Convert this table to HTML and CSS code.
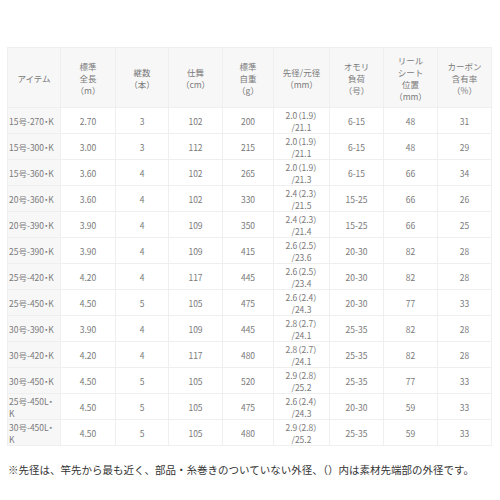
FILE: index.html
```html
<!DOCTYPE html>
<html lang="ja">
<head>
<meta charset="utf-8">
<link rel="stylesheet" href="styles.css">
</head>
<body>
<div class="page">
<table class="spec">
<colgroup>
<col class="c1"><col class="c2"><col class="c3"><col class="c4"><col class="c5"><col class="c6"><col class="c7"><col class="c8"><col class="c9">
</colgroup>
<thead>
<tr>
<th>アイテム</th>
<th>標準<br>全長<br>（m）</th>
<th>継数<br>（本）</th>
<th>仕舞<br>（cm）</th>
<th>標準<br>自重<br>（g）</th>
<th>先径/元径<br>（mm）</th>
<th>オモリ<br>負荷<br>（号）</th>
<th>リール<br>シート<br>位置<br>（mm）</th>
<th>カーボン<br>含有率<br>（%）</th>
</tr>
</thead>
<tbody>
<tr><td class="item">15号-270・K</td><td>2.70</td><td>3</td><td>102</td><td>200</td><td>2.0（1.9）<br>/21.1</td><td>6-15</td><td>48</td><td>31</td></tr>
<tr><td class="item">15号-300・K</td><td>3.00</td><td>3</td><td>112</td><td>215</td><td>2.0（1.9）<br>/21.1</td><td>6-15</td><td>48</td><td>29</td></tr>
<tr><td class="item">15号-360・K</td><td>3.60</td><td>4</td><td>102</td><td>265</td><td>2.0（1.9）<br>/21.3</td><td>6-15</td><td>66</td><td>34</td></tr>
<tr><td class="item">20号-360・K</td><td>3.60</td><td>4</td><td>102</td><td>330</td><td>2.4（2.3）<br>/21.5</td><td>15-25</td><td>66</td><td>26</td></tr>
<tr><td class="item">20号-390・K</td><td>3.90</td><td>4</td><td>109</td><td>350</td><td>2.4（2.3）<br>/21.4</td><td>15-25</td><td>66</td><td>25</td></tr>
<tr><td class="item">25号-390・K</td><td>3.90</td><td>4</td><td>109</td><td>415</td><td>2.6（2.5）<br>/23.6</td><td>20-30</td><td>82</td><td>28</td></tr>
<tr><td class="item">25号-420・K</td><td>4.20</td><td>4</td><td>117</td><td>445</td><td>2.6（2.5）<br>/23.4</td><td>20-30</td><td>82</td><td>28</td></tr>
<tr><td class="item">25号-450・K</td><td>4.50</td><td>5</td><td>105</td><td>475</td><td>2.6（2.4）<br>/24.3</td><td>20-30</td><td>77</td><td>33</td></tr>
<tr><td class="item">30号-390・K</td><td>3.90</td><td>4</td><td>109</td><td>445</td><td>2.8（2.7）<br>/24.1</td><td>25-35</td><td>82</td><td>28</td></tr>
<tr><td class="item">30号-420・K</td><td>4.20</td><td>4</td><td>117</td><td>480</td><td>2.8（2.7）<br>/24.1</td><td>25-35</td><td>82</td><td>28</td></tr>
<tr><td class="item">30号-450・K</td><td>4.50</td><td>5</td><td>105</td><td>520</td><td>2.9（2.8）<br>/25.2</td><td>25-35</td><td>77</td><td>33</td></tr>
<tr><td class="item">25号-450L・<br>K</td><td>4.50</td><td>5</td><td>105</td><td>475</td><td>2.6（2.4）<br>/24.3</td><td>20-30</td><td>59</td><td>33</td></tr>
<tr><td class="item">30号-450L・<br>K</td><td>4.50</td><td>5</td><td>105</td><td>480</td><td>2.9（2.8）<br>/25.2</td><td>25-35</td><td>59</td><td>33</td></tr>
</tbody>
</table>
<p class="note">※先径は、竿先から最も近く、部品・糸巻きのついていない外径、（）内は素材先端部の外径です。</p>
</div>
</body>
</html>
```

FILE: styles.css
```css
html, body {
  margin: 0;
  padding: 0;
  background: #ffffff;
}

.page {
  padding: 47px 9px 0 7px;
  font-family: "Noto Sans CJK JP", "Noto Sans", sans-serif;
}

.spec {
  width: 484px;
  border-collapse: collapse;
  table-layout: fixed;
  font-size: 8.5px;
  line-height: 12px;
  color: #7a7a7a;
}

.c1 { width: 53px; }
.c2 { width: 55px; }
.c3 { width: 53px; }
.c4 { width: 54px; }
.c5 { width: 51px; }
.c6 { width: 56px; }
.c7 { width: 54px; }
.c8 { width: 54px; }
.c9 { width: 54px; }

.spec th,
.spec td {
  border: 1px solid #efefef;
  padding: 0;
  text-align: center;
  vertical-align: middle;
  font-weight: normal;
}

.spec th {
  height: 59px;
  background: #f7f7f7;
  text-spacing-trim: space-all;
}

.spec td {
  height: 25px;
  font-feature-settings: "palt";
}

.spec td.item {
  text-align: left;
  padding-left: 1px;
  background: #f7f7f7;
}

.note {
  margin: 17px 0 0 1px;
  font-size: 10.5px;
  line-height: 14px;
  color: #333333;
  white-space: nowrap;
}
```
